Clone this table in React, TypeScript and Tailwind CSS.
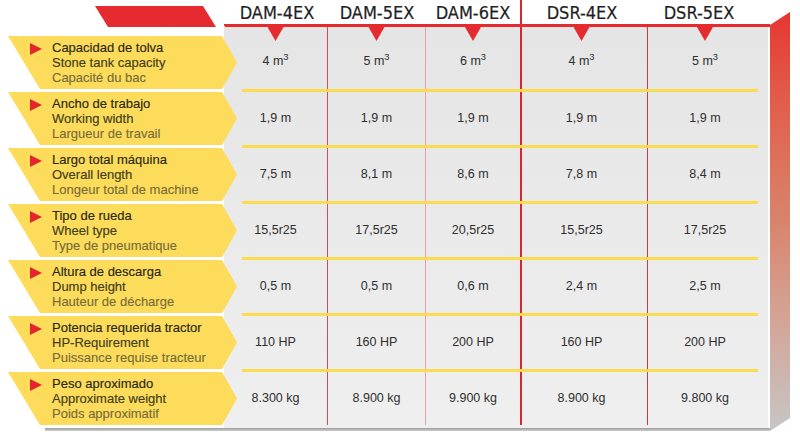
import React from 'react';

const cols = [
  { name: 'DAM-4EX', w: 'w-[104px]', line: 'border-r border-[#d4495c]', head: 'pl-[2px]', pad: '' },
  { name: 'DAM-5EX', w: 'w-[98px]', line: 'border-r border-[#e3a3ad]', head: '', pad: '' },
  { name: 'DAM-6EX', w: 'w-[96px]', line: 'border-r-2 border-[#d8262f]', head: 'border-r-2 border-[#d8262f]', pad: '' },
  { name: 'DSR-4EX', w: 'w-[126px]', line: 'border-r border-[#d93240]', head: 'pr-[6px]', pad: 'pr-[6px]' },
  { name: 'DSR-5EX', w: 'w-[114px]', line: '', head: 'pr-[12px]', pad: '' },
];

const rows = [
  { es: 'Capacidad de tolva', en: 'Stone tank capacity', fr: 'Capacité du bac', v: ['4', '5', '6', '4', '5'], cube: true },
  { es: 'Ancho de trabajo', en: 'Working width', fr: 'Largueur de travail', v: ['1,9 m', '1,9 m', '1,9 m', '1,9 m', '1,9 m'] },
  { es: 'Largo total máquina', en: 'Overall length', fr: 'Longeur total de machine', v: ['7,5 m', '8,1 m', '8,6 m', '7,8 m', '8,4 m'] },
  { es: 'Tipo de rueda', en: 'Wheel type', fr: 'Type de pneumatique', v: ['15,5r25', '17,5r25', '20,5r25', '15,5r25', '17,5r25'] },
  { es: 'Altura de descarga', en: 'Dump height', fr: 'Hauteur de décharge', v: ['0,5 m', '0,5 m', '0,6 m', '2,4 m', '2,5 m'] },
  { es: 'Potencia requerida tractor', en: 'HP-Requirement', fr: 'Puissance requise tracteur', v: ['110 HP', '160 HP', '200 HP', '160 HP', '200 HP'] },
  { es: 'Peso aproximado', en: 'Approximate weight', fr: 'Poids approximatif', v: ['8.300 kg', '8.900 kg', '9.900 kg', '8.900 kg', '9.800 kg'] },
];

function Value({ text, cube }: { text: string; cube?: boolean }) {
  if (!cube) return <span>{text}</span>;
  return (
    <span>
      {text} m<sup>3</sup>
    </span>
  );
}

export default function App() {
  return (
    <div className="w-[800px] h-[440px] bg-white overflow-hidden flex font-['Liberation_Sans',Arial,sans-serif]">
      <div className="w-[770px] flex flex-col">
        {/* Header */}
        <div className="flex h-[27px]">
          <div className="w-[224px] pl-[95px] pt-[6px]">
            <div className="w-[121px] h-[21px] bg-[#e52a30] [clip-path:polygon(0_0,108px_0,121px_100%,13px_100%)]" />
          </div>
          <div className="flex border-b-[3px] border-[#e52a30] rounded-bl-[2px] w-[546px]">
            {cols.map((c) => (
              <div
                key={c.name}
                className={`${c.w} ${c.head} flex items-center justify-center pt-[1px] text-[18px] text-[#1f1f1f] [-webkit-text-stroke:0.2px_#1f1f1f] font-['Liberation_Sans_Narrow','DejaVu_Sans_Condensed',sans-serif]`}
              >
                {c.name}
              </div>
            ))}
          </div>
        </div>

        {/* Body */}
        <div className="flex">
          {/* Labels */}
          <div className="w-[224px] pt-[9px] flex flex-col gap-[3px] relative z-10">
            {rows.map((r) => (
              <div
                key={r.es}
                className="w-[237px] h-[53px] bg-[#fcdc5a] flex items-center pl-[30px] [clip-path:polygon(8px_0,222px_0,237px_50%,222px_100%,40px_100%)]"
              >
                <div className="self-start mt-[7px] w-[12px] h-[12px] bg-[#e3262d] [clip-path:polygon(0_0,100%_50%,0_100%)]" />
                <div className="ml-[10px] text-[13px] leading-[15px] whitespace-nowrap">
                  <div className="text-[#2b2818] [-webkit-text-stroke:0.15px_#2b2818]">{r.es}</div>
                  <div className="text-[#433d20] [-webkit-text-stroke:0.15px_#433d20]">{r.en}</div>
                  <div className="text-[#756a3a] [-webkit-text-stroke:0.1px_#756a3a]">{r.fr}</div>
                </div>
              </div>
            ))}
          </div>

          {/* Data panel */}
          <div className="w-[546px] flex flex-col pb-[3px] bg-linear-to-b from-[#e5e5e5] to-[#efefef] border-r-2 border-white">
            {rows.map((r, i) => (
              <React.Fragment key={r.es}>
                {i > 0 && <div className="ml-[18px] w-[516px] h-[3px] bg-[#fbdc4e]" />}
                <div className={`flex ${i === 0 ? 'h-[62px]' : 'h-[53px]'}`}>
                  {cols.map((c, j) => (
                    <div key={c.name} className={`${c.w} ${c.line} ${c.pad} flex flex-col items-center`}>
                      {i === 0 && (
                        <div className="w-[16px] h-[14px] bg-[#e52a30] [clip-path:polygon(0_0,100%_0,50%_100%)]" />
                      )}
                      <div
                        className={`flex-1 flex items-center justify-center text-[12.5px] text-[#2f2f2f] ${i === 0 ? 'pb-[7px]' : ''}`}
                      >
                        <Value text={r.v[j]} cube={r.cube} />
                      </div>
                    </div>
                  ))}
                </div>
              </React.Fragment>
            ))}
          </div>
        </div>

        {/* Bottom shadow edge */}
        <div className="ml-[45px] w-[725px] h-[3px] bg-linear-to-b from-[#9c9c9c] to-[#cfcfcf]" />
      </div>

      {/* Right 3D side face */}
      <div className="w-[20px] h-[432px] bg-linear-to-b from-[#e62c2c] via-[#d9826a] to-[#c6c6c6] [clip-path:polygon(0_25px,100%_12px,100%_418px,0_431px)]" />
    </div>
  );
}
